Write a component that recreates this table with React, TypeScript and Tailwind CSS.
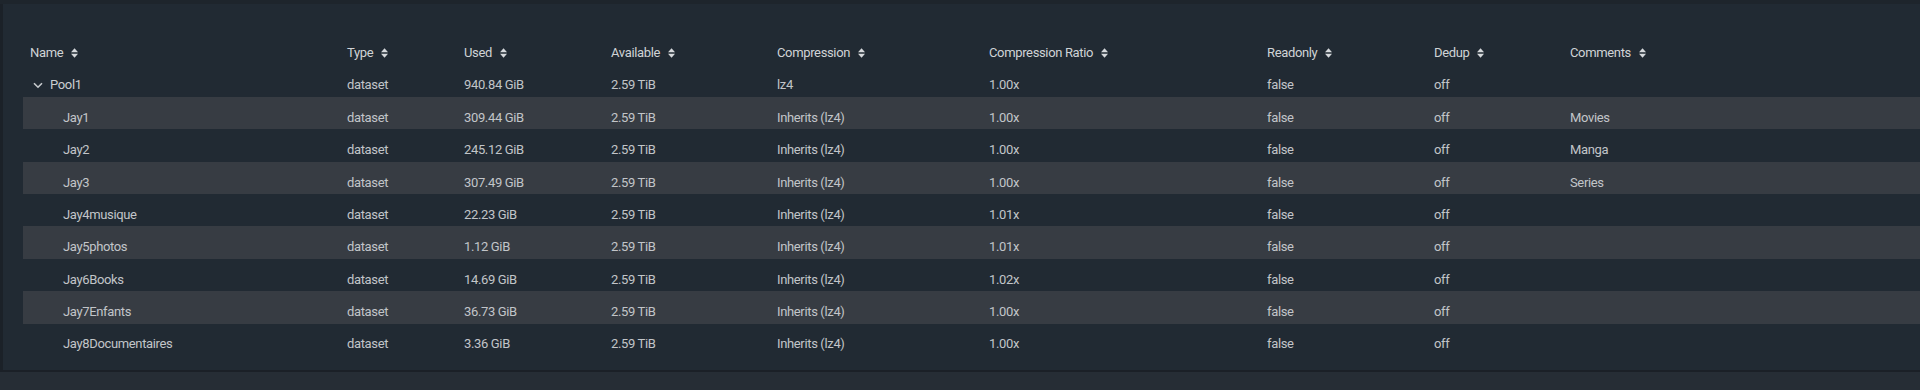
import React from "react";

const cols = "grid-cols-[317px_117px_147px_166px_212px_278px_167px_136px_1fr]";

type Row = {
  name: string;
  used: string;
  comp: string;
  ratio: string;
  comment: string;
  root?: boolean;
};

const rows: Row[] = [
  { name: "Pool1", used: "940.84 GiB", comp: "lz4", ratio: "1.00x", comment: "", root: true },
  { name: "Jay1", used: "309.44 GiB", comp: "Inherits (lz4)", ratio: "1.00x", comment: "Movies" },
  { name: "Jay2", used: "245.12 GiB", comp: "Inherits (lz4)", ratio: "1.00x", comment: "Manga" },
  { name: "Jay3", used: "307.49 GiB", comp: "Inherits (lz4)", ratio: "1.00x", comment: "Series" },
  { name: "Jay4musique", used: "22.23 GiB", comp: "Inherits (lz4)", ratio: "1.01x", comment: "" },
  { name: "Jay5photos", used: "1.12 GiB", comp: "Inherits (lz4)", ratio: "1.01x", comment: "" },
  { name: "Jay6Books", used: "14.69 GiB", comp: "Inherits (lz4)", ratio: "1.02x", comment: "" },
  { name: "Jay7Enfants", used: "36.73 GiB", comp: "Inherits (lz4)", ratio: "1.00x", comment: "" },
  { name: "Jay8Documentaires", used: "3.36 GiB", comp: "Inherits (lz4)", ratio: "1.00x", comment: "" },
];

const headers = [
  "Name",
  "Type",
  "Used",
  "Available",
  "Compression",
  "Compression Ratio",
  "Readonly",
  "Dedup",
  "Comments",
];

function SortIcon() {
  return (
    <svg width="7" height="10" viewBox="0 0 7 10" className="ml-[8px] shrink-0">
      <path d="M3.5 0.3 L7 4.3 L0 4.3 Z" fill="#d6d9dc" />
      <path d="M3.5 9.7 L7 5.7 L0 5.7 Z" fill="#d6d9dc" />
    </svg>
  );
}

function Chevron() {
  return (
    <svg width="10" height="7" viewBox="0 0 10 7" className="mr-[7px] ml-[3px] shrink-0">
      <path d="M1 1.2 L5 5.2 L9 1.2" fill="none" stroke="#c8cbce" strokeWidth="1.6" />
    </svg>
  );
}

export default function App() {
  return (
    <div
      className="w-full h-[390px] bg-[#1b2128] flex flex-col overflow-hidden tracking-[-0.35px]"
      style={{ fontFamily: "Roboto, 'Noto Sans', sans-serif" }}
    >
      <div className="h-[4px] bg-[#1e252c] shrink-0" />
      <div className="flex-1 flex flex-col pl-[3px]">
        <div className="flex-1 bg-[#212a33] pl-[20px] pt-[28px]">
          <div className={`grid ${cols} h-[32.4px] text-[13px] text-[#d0d3d6]`}>
            {headers.map((h) => (
              <div key={h} className="flex items-center pt-[9px] pl-[7px] whitespace-nowrap">
                <span>{h}</span>
                <SortIcon />
              </div>
            ))}
          </div>
          {rows.map((r, i) => (
            <div
              key={r.name}
              className={`grid ${cols} h-[32.4px] text-[13px] text-[#c2c5c9] ${
                i % 2 === 1 ? "bg-[#373c43]" : ""
              }`}
            >
              <div className="flex items-center pt-[9px] pl-[7px] whitespace-nowrap">
                {r.root ? (
                  <>
                    <Chevron />
                    <span className="text-[#cbced1]">{r.name}</span>
                  </>
                ) : (
                  <span className="pl-[33px]">{r.name}</span>
                )}
              </div>
              <div className="flex items-center pt-[9px] pl-[7px]">dataset</div>
              <div className="flex items-center pt-[9px] pl-[7px]">{r.used}</div>
              <div className="flex items-center pt-[9px] pl-[7px]">2.59 TiB</div>
              <div className="flex items-center pt-[9px] pl-[7px]">{r.comp}</div>
              <div className="flex items-center pt-[9px] pl-[7px]">{r.ratio}</div>
              <div className="flex items-center pt-[9px] pl-[7px]">false</div>
              <div className="flex items-center pt-[9px] pl-[7px]">off</div>
              <div className="flex items-center pt-[9px] pl-[7px]">{r.comment}</div>
            </div>
          ))}
        </div>
      </div>
      <div className="h-[20px] shrink-0 bg-[#262d35] border-t-[2px] border-[#1b2027]" />
    </div>
  );
}
